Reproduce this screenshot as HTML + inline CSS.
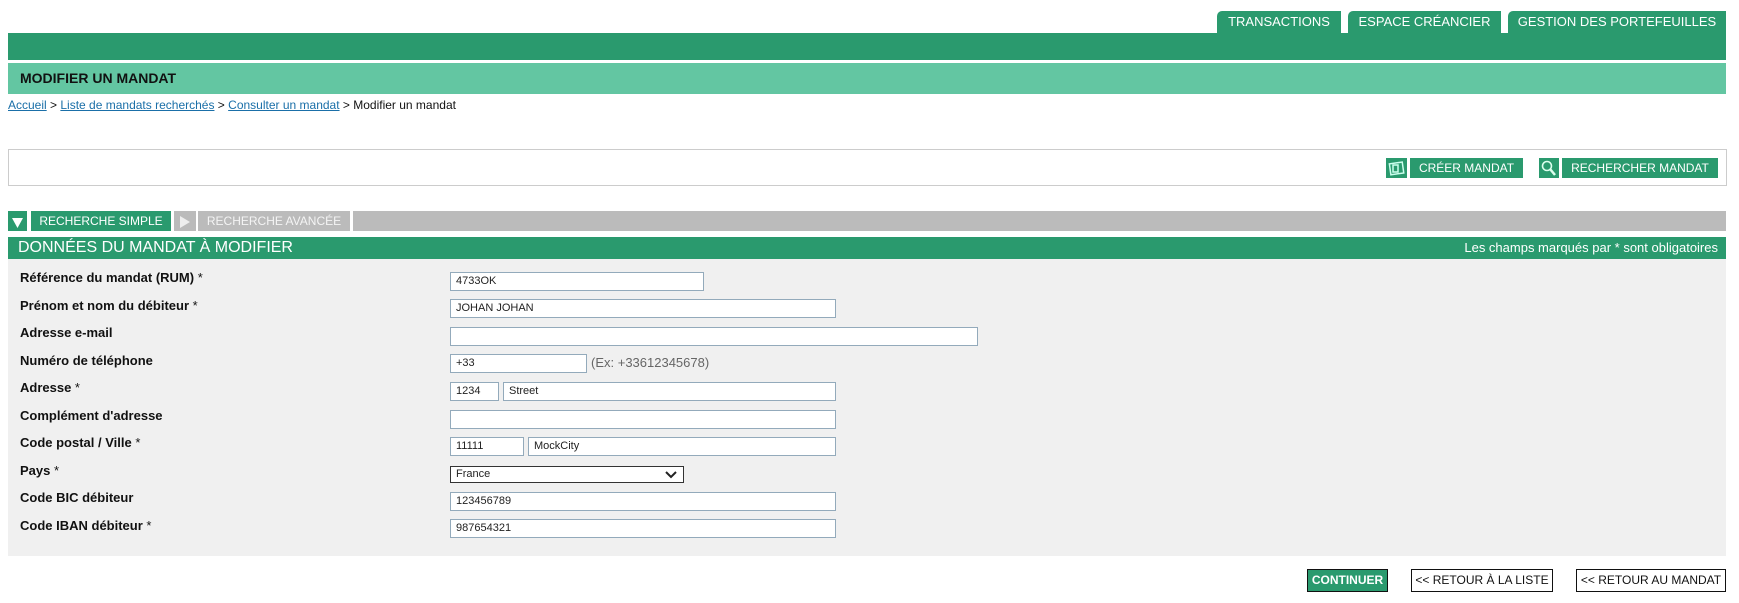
<!DOCTYPE html>
<html><head><meta charset="utf-8"><style>
*{margin:0;padding:0;box-sizing:border-box}
body{width:1739px;height:603px;background:#fff;font-family:"Liberation Sans",Arial,sans-serif;position:relative;overflow:hidden}
.a{position:absolute}
.tab{position:absolute;top:11px;height:23px;background:#2a9a6e;color:#fff;font-size:13px;line-height:22px;text-align:center;border-radius:5px 0 0 0}
.lbl{position:absolute;left:20px;font-size:13px;font-weight:bold;color:#111}
.lbl span{font-weight:normal}
.in{position:absolute;height:19px;background:#fff;border:1px solid #93aabb;font-size:11px;line-height:17px;padding-left:5px;color:#222}
.gbtn{position:absolute;top:158px;height:20px;background:#2a9a6e;color:#fff;font-size:12px;line-height:20px;text-align:center}
.ico{position:absolute;top:158px;height:20px;background:#2a9a6e}
.bb{position:absolute;top:569px;height:23px;border:1px solid #111;font-size:12px;line-height:21px;text-align:center;background:#fff;color:#111}
a{color:#1a6fa8;text-decoration:underline}
</style></head><body>
<div class="tab" style="left:1217px;width:124px">TRANSACTIONS</div>
<div class="tab" style="left:1348px;width:153px">ESPACE CRÉANCIER</div>
<div class="tab" style="left:1508px;width:218px">GESTION DES PORTEFEUILLES</div>
<div class="a" style="left:8px;top:33px;width:1718px;height:27px;background:#2a9a6e"></div>
<div class="a" style="left:8px;top:63px;width:1718px;height:31px;background:#63c6a2;font-size:14px;font-weight:bold;line-height:31px;padding-left:12px;color:#111">MODIFIER UN MANDAT</div>
<div class="a" style="left:8px;top:98px;font-size:12px;color:#111"><a>Accueil</a> &gt; <a>Liste de mandats recherchés</a> &gt; <a>Consulter un mandat</a> &gt; Modifier un mandat</div>
<div class="a" style="left:8px;top:149px;width:1719px;height:37px;border:1px solid #ccc"></div>
<div class="ico" style="left:1386px;width:21px"><svg width="21" height="20"><rect x="4" y="5" width="13" height="11" fill="none" stroke="#cfe" stroke-width="1.5" transform="rotate(-8 10 10)"/><rect x="7" y="7" width="5" height="7" fill="none" stroke="#cfe" stroke-width="1.5"/></svg></div>
<div class="gbtn" style="left:1410px;width:113px">CRÉER MANDAT</div>
<div class="ico" style="left:1539px;width:20px"><svg width="20" height="20"><circle cx="8" cy="8" r="4.5" fill="none" stroke="#dfe" stroke-width="1.6"/><path d="M11 11L16 17" stroke="#dfe" stroke-width="2.5"/></svg></div>
<div class="gbtn" style="left:1562px;width:156px">RECHERCHER MANDAT</div>
<div class="a" style="left:8px;top:211px;width:1718px;height:20px;background:#bbb"></div>
<div class="a" style="left:8px;top:211px;width:19px;height:20px;background:#2a9a6e"><svg width="19" height="20"><path d="M4 7H15L9.5 17Z" fill="#fff"/></svg></div>
<div class="a" style="left:27px;top:211px;width:4px;height:20px;background:#fff"></div>
<div class="a" style="left:31px;top:211px;width:140px;height:20px;background:#2a9a6e;color:#fff;font-size:12px;line-height:20px;text-align:center">RECHERCHE SIMPLE</div>
<div class="a" style="left:171px;top:211px;width:3px;height:20px;background:#fff"></div>
<div class="a" style="left:174px;top:211px;width:22px;height:20px;background:#bbb"><svg width="22" height="20"><path d="M6 5V17L16 11Z" fill="#eee"/></svg></div>
<div class="a" style="left:196px;top:211px;width:2px;height:20px;background:#fff"></div>
<div class="a" style="left:198px;top:211px;width:152px;height:20px;background:#bbb;color:#f4f4f4;font-size:12px;line-height:20px;text-align:center">RECHERCHE AVANCÉE</div>
<div class="a" style="left:350px;top:211px;width:3px;height:20px;background:#fff"></div>
<div class="a" style="left:8px;top:237px;width:1718px;height:22px;background:#2a9a6e;color:#fff;font-size:16px;line-height:22px;padding-left:10px">DONNÉES DU MANDAT À MODIFIER<span style="position:absolute;right:8px;font-size:13px">Les champs marqués par * sont obligatoires</span></div>
<div class="a" style="left:8px;top:259px;width:1718px;height:297px;background:#f0f0f0"></div>

<div class="lbl" style="top:270px">Référence du mandat (RUM) <span>*</span></div>
<div class="in" style="left:450px;top:272px;width:254px">4733OK</div>
<div class="lbl" style="top:298px">Prénom et nom du débiteur <span>*</span></div>
<div class="in" style="left:450px;top:299px;width:386px">JOHAN JOHAN</div>
<div class="lbl" style="top:325px">Adresse e-mail</div>
<div class="in" style="left:450px;top:327px;width:528px"></div>
<div class="lbl" style="top:353px">Numéro de téléphone</div>
<div class="in" style="left:450px;top:354px;width:137px">+33</div>
<div class="a" style="left:591px;top:355px;font-size:13px;color:#666">(Ex: +33612345678)</div>
<div class="lbl" style="top:380px">Adresse <span>*</span></div>
<div class="in" style="left:450px;top:382px;width:49px">1234</div>
<div class="in" style="left:503px;top:382px;width:333px">Street</div>
<div class="lbl" style="top:408px">Complément d'adresse</div>
<div class="in" style="left:450px;top:410px;width:386px"></div>
<div class="lbl" style="top:435px">Code postal / Ville <span>*</span></div>
<div class="in" style="left:450px;top:437px;width:74px">11111</div>
<div class="in" style="left:528px;top:437px;width:308px">MockCity</div>
<div class="lbl" style="top:463px">Pays <span>*</span></div>
<div class="in" style="left:450px;top:466px;width:234px;height:17px;border-color:#333;line-height:15px">France<svg style="position:absolute;right:6px;top:4px" width="12" height="8"><path d="M1 1L6 6L11 1" fill="none" stroke="#222" stroke-width="2"/></svg></div>
<div class="lbl" style="top:490px">Code BIC débiteur</div>
<div class="in" style="left:450px;top:492px;width:386px">123456789</div>
<div class="lbl" style="top:518px">Code IBAN débiteur <span>*</span></div>
<div class="in" style="left:450px;top:519px;width:386px">987654321</div>

<div class="bb" style="left:1307px;width:81px;background:#2a9a6e;color:#fff;font-weight:bold;border-color:#111">CONTINUER</div>
<div class="bb" style="left:1411px;width:142px">&lt;&lt; RETOUR À LA LISTE</div>
<div class="bb" style="left:1576px;width:150px">&lt;&lt; RETOUR AU MANDAT</div>
</body></html>
